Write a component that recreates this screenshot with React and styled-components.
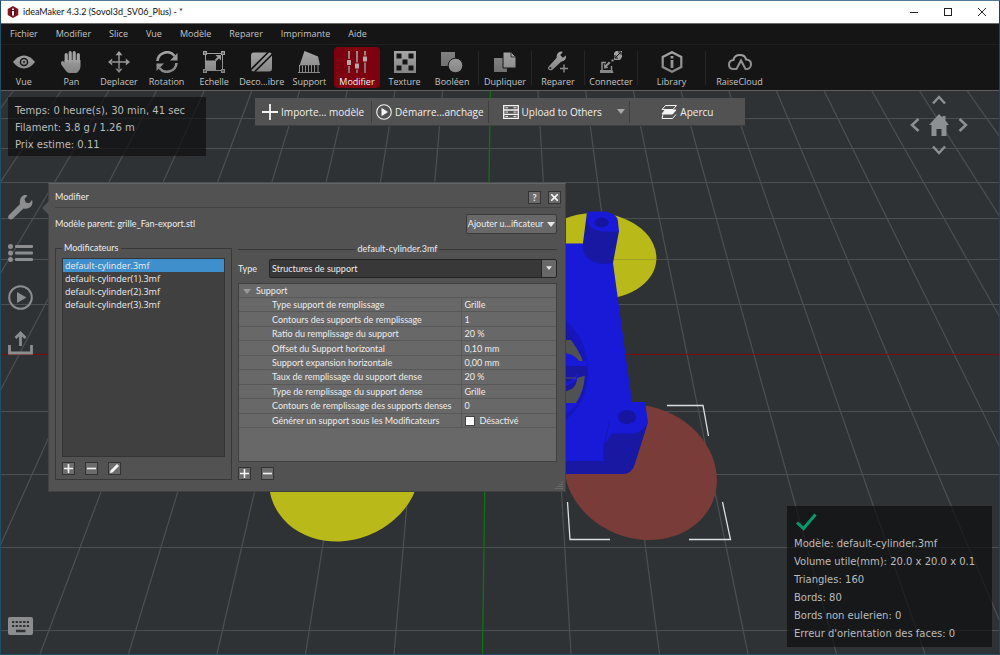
import React, { useState } from "react";
import styled, { createGlobalStyle, css } from "styled-components";

const uiFont = `"Open Sans", "Noto Sans", sans-serif`;
const panelFont = `Lato, "Open Sans", sans-serif`;
const hudFont = `"DejaVu Sans", Verdana, sans-serif`;

const GlobalStyle = createGlobalStyle`
  *, *::before, *::after { box-sizing: border-box; }
  body { margin: 0; background: #2e3235; font: 9px/12px ${uiFont}; color: #c4c4c4; }
  button, select, input { font: inherit; color: inherit; margin: 0; }
  button { padding: 0; border: 0; background: none; cursor: pointer; white-space: nowrap; }
  svg { display: block; flex: none; }
`;

const Window = styled.div`
  min-height: 100vh;
  display: flex;
  flex-direction: column;
  border: 1px solid #1d5068;
  border-top-color: #54799b;
  border-right-color: #27435c;
`;

/* Title bar */
const TitleBar = styled.header`
  height: 22px;
  display: flex;
  align-items: center;
  gap: 4px;
  padding: 0 0 0 6px;
  background: #fff;
  color: #111;
`;
const WindowTitle = styled.h1`
  flex: 1;
  margin: 0;
  font: 9px/12px ${panelFont};
`;
const CaptionButtons = styled.div`
  display: flex;
`;
const CaptionButton = styled.button`
  width: 34px;
  height: 22px;
  display: grid;
  place-items: center;
`;

/* Menu and tool bars */
const MenuBar = styled.nav`
  height: 22px;
  display: flex;
  align-items: center;
  border-top: 1px solid #6a6a6a;
  border-bottom: 1px solid #1f1f1f;
  background: #151515;
`;
const MenuItem = styled.button`
  height: 20px;
  padding: 0 9px;
`;
const ToolBar = styled.div`
  height: 46px;
  display: flex;
  align-items: center;
  background: #151515;
  border-bottom: 1px solid #5c5e5f;
`;
const ToolGroup = styled.div`
  width: 474px;
  margin-right: 3px;
  display: flex;
  gap: 2px;
`;
const ToolCell = styled.div`
  width: ${(p) => (p.$wide ? 68 : 53)}px;
  height: 34px;
  display: flex;
  align-items: center;
  justify-content: center;
  border-left: 1px solid #262626;
`;
const ToolButton = styled.button`
  flex: 1;
  min-width: 0;
  height: 41px;
  display: flex;
  flex-direction: column;
  align-items: center;
  gap: 3px;
  padding-top: 4px;
  border-radius: 4px;
  ${(p) => p.$active && css`background: #7c0210; color: #f2f2f2;`}
`;

/* 3D view */
const Viewport = styled.main`
  position: relative;
  flex: 1;
  min-height: 560px;
  background: #2e3235;
  overflow: hidden;
`;
const Scene = styled.svg`
  position: absolute;
  inset: 0;
  width: 100%;
  height: 100%;
`;
const Hud = styled.section`
  position: absolute;
  padding: 0 7px;
  background: rgba(10, 10, 12, 0.66);
  color: #bcbcbc;
  font: 10px/17px ${hudFont};
  white-space: nowrap;
  p { margin: 0; }
`;
const PrintStats = styled(Hud)`
  left: 7px;
  top: 6px;
  width: 198px;
  padding: 5px 7px 3px;
`;
const ModelInfo = styled(Hud)`
  right: 7px;
  bottom: 7px;
  width: 205px;
  line-height: 18px;
  padding: 7px 7px 4px;
  svg { margin: 0 0 4px 2px; }
`;
const ActionBar = styled.div`
  position: absolute;
  left: 50%;
  top: 7px;
  width: 490px;
  height: 28px;
  margin-left: -245px;
  display: flex;
  align-items: center;
  background: #525252;
  border-bottom: 1px solid #404040;
  color: #f0f0f0;
  font-size: 10px;
`;
const ActionButton = styled.button`
  flex: 1 1 116px;
  height: 22px;
  display: flex;
  align-items: center;
  justify-content: center;
  gap: 3px;
  & + & { border-left: 1px solid #3e3e3e; }
`;
const UploadButton = styled(ActionButton)`
  flex-basis: 141px;
  justify-content: flex-start;
  padding: 0 4px 0 14px;
  > :last-child { margin-left: auto; }
`;
const ViewNav = styled.nav`
  position: absolute;
  right: 24px;
  top: 0;
  display: grid;
  grid-template-columns: 24px 24px 24px;
  grid-template-rows: 18px 32px 18px;
  place-items: center;
  color: #8d9092;
`;
const NavButton = styled.button`
  grid-area: ${(p) => p.$area};
  display: grid;
  place-items: center;
`;
const SideDock = styled.nav`
  position: absolute;
  left: 7px;
  top: 104px;
  bottom: 16px;
  display: flex;
  flex-direction: column;
  gap: 20px;
  color: #8b8d8f;
  > :last-child { margin-top: auto; }
`;
const DockButton = styled.button`
  width: 25px;
  height: 25px;
  display: grid;
  place-items: center;
`;

/* Modifier panel */
const Panel = styled.section`
  position: absolute;
  left: 47px;
  top: 92px;
  width: 518px;
  padding: 7px 8px 11px 6px;
  background: #525252;
  border: 1px solid #414141;
  border-top-color: #626465;
  color: #ededed;
  font: 9px/12px ${panelFont};
  &::before {
    content: "";
    position: absolute;
    left: -7px;
    top: 17px;
    border: solid transparent;
    border-width: 7px 7px 7px 0;
    border-right-color: #525252;
  }
`;
const PanelHeader = styled.header`
  display: flex;
  align-items: center;
  gap: 7px;
  height: 17px;
  padding-bottom: 4px;
  border-bottom: 1px solid #434343;
  margin-right: -4px;
`;
const PanelTitle = styled.h2`
  flex: 1;
  margin: 0;
  font: inherit;
`;
const SquareButton = styled.button`
  width: 13px;
  height: 13px;
  display: grid;
  place-items: center;
  background: #6c6c6c;
  border: 1px solid #333;
`;
const ParentRow = styled.div`
  display: flex;
  align-items: center;
  justify-content: space-between;
  margin-top: 6px;
`;
const AddButton = styled.button`
  width: 91px;
  height: 20px;
  display: flex;
  align-items: center;
  justify-content: center;
  gap: 4px;
  background: #686868;
  border: 1px solid #3a3a3a;
  border-radius: 2px;
`;
const PanelBody = styled.div`
  display: flex;
  gap: 6px;
  margin-top: 9px;
`;
const ModifierSet = styled.fieldset`
  width: 177px;
  margin: 0;
  padding: 5px 6px 3px;
  display: flex;
  flex-direction: column;
  border: 1px solid #383838;
  legend { padding: 0 2px; line-height: 10px; }
`;
const ModifierList = styled.ul`
  height: 199px;
  margin: 0;
  padding: 0;
  list-style: none;
  background: #404040;
  border: 1px solid #343434;
  font-family: ${uiFont};
`;
const ModifierItem = styled.button`
  width: 100%;
  height: 13px;
  padding: 0 2px;
  text-align: left;
  line-height: 13px;
  display: block;
  ${(p) => p.$selected && css`background: #3e8fcb;`}
`;
const ButtonRow = styled.div`
  display: flex;
  gap: 10px;
  margin-top: 5px;
`;
const Settings = styled.div`
  flex: 1;
  min-width: 0;
`;
const SettingsTitle = styled.h3`
  display: flex;
  align-items: center;
  gap: 2px;
  height: 12px;
  margin: 0 0 4px;
  font: inherit;
  &::before, &::after { content: ""; flex: 1; height: 1px; background: #383838; }
`;
const TypeRow = styled.div`
  display: flex;
  align-items: center;
  justify-content: space-between;
`;
const SelectBox = styled.div`
  position: relative;
  width: 288px;
  svg { position: absolute; right: 5px; top: 7px; pointer-events: none; }
`;
const Select = styled.select`
  display: block;
  width: 100%;
  height: 19px;
  padding: 0 2px;
  appearance: none;
  border: 1px solid #242424;
  border-radius: 2px;
  background: linear-gradient(90deg, #383838 calc(100% - 15px), #242424 0, #242424 calc(100% - 14px), #686868 0);
`;
const SettingsView = styled.div`
  height: 179px;
  margin-top: 5px;
  background: #686868;
  border: 1px solid #3f3f3f;
`;
const SettingsTable = styled.table`
  width: 100%;
  height: 144px;
  table-layout: fixed;
  border-collapse: collapse;
  line-height: 12px;
  th { font-weight: normal; text-align: left; }
  th, td { padding: 1px 0 0; border-bottom: 1px solid #585858; white-space: nowrap; }
  tbody th { padding-left: 33px; width: 222px; }
  td { padding-left: 3px; border-left: 1px solid #585858; }
`;
const GroupToggle = styled.button`
  display: flex;
  align-items: center;
  gap: 5px;
  padding-left: 4px;
`;
const CheckLabel = styled.label`
  display: flex;
  align-items: center;
  gap: 5px;
`;
const CheckBox = styled.input`
  appearance: none;
  width: 10px;
  height: 10px;
  background: #fff;
  border: 1px solid #444;
`;
const Grip = styled.svg`
  position: absolute;
  right: 2px;
  bottom: 1px;
`;
const SharedPaints = styled.svg`
  position: absolute;
`;

const Caret = ({ size = 8, color = "#e8e8e8" }) => (
  <svg width={size} height={size / 2 + 1} viewBox="0 0 8 5"><path d="M0 0h8L4 5z" fill={color} /></svg>
);

const toolIcons = {
  eye: <><path d="M0 11Q5 4.500 11 4.500T22 11Q17 17.500 11 17.500T0 11z" /><circle cx="11" cy="11" r="4.300" fill="#151515" /><circle cx="11" cy="11" r="2.800" /><circle cx="11" cy="11" r="1.200" fill="#333" /></>,
  hand: <>
    <path d="M4.500 9h16v6.500q0 3-2.500 5.500-1 1-2.500 1h-6q-2 0-3.500-2L1.200 13.500Q.500 10.500 2 10q1.500-.500 2.500 1.500z" />
    <path d="M6.200 10V3.500M10.200 10V1.700M14.200 10V1.700M18.300 10.500V3.500" fill="none" stroke="#a2a2a2" strokeWidth="3.200" strokeLinecap="round" />
  </>,
  move: <path d="M10.300 3.500v6.800H3.500v1.400h6.800v6.800h1.400v-6.800h6.800v-1.400h-6.800V3.500zM11 0L7.500 4.200h7zM11 22l-3.500-4.200h7zM0 11l4.200-3.500v7zM22 11l-4.200-3.500v7z" />,
  rotate: <><g fill="none" stroke="url(#metal)" strokeWidth="2.600"><path d="M1.500 10A9.500 9.500 0 0 1 18.500 5" /><path d="M20.500 12A9.500 9.500 0 0 1 3.500 17" /></g><path d="M21.500 2v7.500h-7.500zM.500 20v-7.500h7.500z" /></>,
  scale: <><g fill="none" stroke="url(#metal)"><rect x="2.500" y="2.500" width="17" height="17" /><path d="M12.500 9.500L16.500 5.500" strokeWidth="1.800" /></g><path d="M2.500 9.500h10.500v10H2.500zM0 0h4v4H0zM18 0h4v4h-4zM0 18h4v4H0zM18 18h4v4h-4zM18 4v5.500L12.500 4z" /><path d="M1.300 1.300h1.400v1.400H1.300zM19.300 1.300h1.400v1.400h-1.400zM1.300 19.300h1.400v1.400H1.300zM19.300 19.300h1.400v1.400h-1.400z" fill="#333" /></>,
  cut: <><rect x="0" y="1.500" width="21" height="19" rx="3" /><path d="M0 18.500L17.500 1M3.500 21L21.500 3" stroke="#151515" strokeWidth="1.600" /></>,
  support: <><path d="M6.500 0L20 5.500 22 14 1.500 14.500z" /><path d="M1.500 14v7M4.500 15v6M7.500 15v6M10.500 14v7M13.500 14v7M16.500 13v8M20 13v8M0 21.500h22" stroke="url(#metal)" /></>,
  sliders: <><path d="M2 0h2v22H2zM10 0h2v22h-2zM18 0h2v22h-2z" opacity=".8" /><path d="M0 8h6v7H0zM8 11.500h6v7H8zM16 4.500h6v7h-6z" fill="#7c0210" /><path d="M1 9h4v5H1zM9 12.500h4v5H9zM17 5.500h4v5h-4z" fill="#b9a7a9" /></>,
  texture: <path fillRule="evenodd" d="M0 0h22v22H0zM2.500 2.500h5v5h-5zM14.500 2.500h5v5h-5zM8.500 8.500h5v5h-5zM2.500 14.500h5v5h-5zM14.500 14.500h5v5h-5z" />,
  boolean: <><path d="M0 1h14v14H0z" opacity=".75" /><circle cx="14.500" cy="14.500" r="7.300" stroke="#151515" /></>,
  duplicate: <><path d="M0 7h13v14H0z" opacity=".8" /><path d="M9 1h8l5 5v11H9z" stroke="#151515" /><path d="M17 1v5h5" fill="none" stroke="#333" /></>,
  repair: <><path d="M14 1q2-1 4 0l-3 3.500 3 3L21.500 5q.800 6-5.500 7l-10 9q-4 1-5-1.500 0-2 2-3.500l8-8.500Q10.500 3 14 1z" transform="scale(.88 .9)" /><circle cx="3.300" cy="17" r="1" fill="#151515" /><path d="M16.300 13.500v3.300H13v1.400h3.300v3.300h1.400v-3.300H21v-1.400h-3.300v-3.300z" /></>,
  connect: <><path d="M2 19v-7.500h4M11.500 15v4M1 20.500h11" fill="none" stroke="url(#metal)" strokeWidth="1.500" /><path d="M0 19h12.500l1 3H0z" /><path d="M4 17.500v-5l1.500 1.500L9 10.500l1.500 1.500L7 15.500 8.500 17z" /><path d="M11.500 8.500h2v2h-2z" /><path d="M14 2l2-2h6v6l-2 3h-6z" /><path d="M15.500 6.500l5-5M15 4v3h3M18 1h3v3" fill="none" stroke="#151515" /></>,
  library: <><path d="M11 1.200L20.300 6v10L11 20.800 1.700 16V6z" fill="none" stroke="url(#metal)" strokeWidth="2.200" /><path d="M9.600 5h2.800v2.500H9.600zM9.600 9h2.800v8H9.600z" /></>,
  cloud: <path d="M8 18H4.500C1.500 18 0 16 0 13.500S2 9 4.500 9C5 6 7.500 4 11 4s5.500 2 6 4.500c3 0 5 2 5 4.500s-1.500 5-4 5h-1.500L12 9.500 7.500 18" fill="none" stroke="url(#metal)" strokeWidth="2" transform="translate(1 0)" />,
};

const mainTools = [
  ["Vue", "eye"], ["Pan", "hand"], ["Deplacer", "move"], ["Rotation", "rotate"], ["Echelle", "scale"],
  ["Deco...ibre", "cut"], ["Support", "support"], ["Modifier", "sliders"], ["Texture", "texture"], ["Booléen", "boolean"],
];
const extraTools = [
  ["Dupliquer", "duplicate"], ["Reparer", "repair"], ["Connecter", "connect"], ["Library", "library", true], ["RaiseCloud", "cloud", true],
];

const Tool = ({ label, icon, active }) => (
  <ToolButton $active={active} aria-pressed={active}>
    <svg width={icon === "cloud" ? 26 : 22} height="22" viewBox={icon === "cloud" ? "-1 0 26 22" : "0 0 22 22"} fill="url(#metal)" aria-hidden="true">
      {toolIcons[icon]}
    </svg>
    <span>{label}</span>
  </ToolButton>
);

const gridRows = [118, 148, 182, 218, 259, 304, 411, 474, 547, 630];
const gridColumns = Array.from({ length: 31 }, (_, i) => i - 15).filter((n) => n !== 0);

const PrintBed = () => (
  <Scene viewBox="1 91 998 563" preserveAspectRatio="xMidYMid slice" aria-label="Plateau">
    <g stroke="#4d5053" strokeWidth="1.200">
      {gridRows.map((y) => <path key={y} d={`M-500 ${y + 0.5}H1500`} />)}
      {gridColumns.map((n) => <path key={n} d={`M${490.3 + 47.7 * n} 91L${482.5 + 88.5 * n} 654`} />)}
    </g>
    <path d="M-500 354.500H1500" stroke="#7c0c0e" />
    <path d="M490.300 91L482.500 654" stroke="#0d7411" strokeWidth="1.300" />
    <ellipse cx="597" cy="256" rx="59.500" ry="43" fill="#b9b919" transform="rotate(4 597 256)" />
    <path d="M566 259.500H656" stroke="#a0a02c" />
    <ellipse cx="344.500" cy="474" rx="77" ry="66" fill="#b9b919" transform="rotate(-22 344 474)" />
    <ellipse cx="640.500" cy="472" rx="78" ry="66" fill="#7a3c38" transform="rotate(22 640 472)" />
    <path d="M560 243.500H584L613 263 632 402H645L648 422 635 463Q632 474 623 474H560z" fill="#1919d8" />
    <path d="M560 461H604V445L612 433.500H634Q643 432 648 422L635 463Q632 474 623 474H560z" fill="#1818a2" />
    <path d="M604 461V445L610 420" fill="none" stroke="#1616b4" strokeWidth="1" />
    <ellipse cx="627" cy="417" rx="9" ry="7" fill="#1515a0" />
    <path d="M587 212L583 243V250Q586 263 605 264L613 263 619 231 600 222z" fill="#1818a2" />
    <path d="M587 211.500H605Q618 214 618 222L619 231.500H603Q589 230 587 220z" fill="#1919d8" />
    <ellipse cx="601.500" cy="222.500" rx="7" ry="5" fill="#1515a0" />
    <path d="M560 315Q588 337 588 372 588 405 560 424z" fill="#1616bb" />
    <path d="M560 340H571Q585 358 585 374 584 392 576 403H560z" fill="#505152" />
    <path d="M560 326Q568 328 572 340H560z" fill="#1818a2" />
    <path d="M560 353Q573 352 579 361H587V366H560z" fill="#1919d8" />
    <path d="M560 366H587V375L577 378Q577 391 560 392z" fill="#1818a2" />
    <path d="M560 384Q574 385 577 375" fill="none" stroke="#1919d8" strokeWidth="3" />
    <path d="M560 378H576" stroke="#505152" strokeWidth="1" />
    <path d="M560 403H578Q572 412 560 416z" fill="#1919d8" />
    <g fill="none" stroke="#dedede" strokeWidth="1.300">
      <path d="M667 405.500H703L708.500 436M567.500 502L570 539.500H610M689 539.500H730.500L722.500 502" />
    </g>
  </Scene>
);

const menus = ["Fichier", "Modifier", "Slice", "Vue", "Modèle", "Reparer", "Imprimante", "Aide"];
const modifiers = ["default-cylinder.3mf", "default-cylinder(1).3mf", "default-cylinder(2).3mf", "default-cylinder(3).3mf"];
const settings = [
  ["Type support de remplissage", "Grille"],
  ["Contours des supports de remplissage", "1"],
  ["Ratio du remplissage du support", "20 %"],
  ["Offset du Support horizontal", "0,10 mm"],
  ["Support expansion horizontale", "0,00 mm"],
  ["Taux de remplissage du support dense", "20 %"],
  ["Type de remplissage du support dense", "Grille"],
  ["Contours de remplissage des supports denses", "0"],
];

const Plus = () => <svg width="9" height="9" viewBox="0 0 9 9"><path d="M0 4.500h9M4.500 0v9" stroke="#f4f4f4" strokeWidth="1.600" /></svg>;
const Minus = () => <svg width="9" height="9" viewBox="0 0 9 9"><path d="M0 4.500h9" stroke="#f4f4f4" strokeWidth="1.600" /></svg>;
const Pencil = () => <svg width="9" height="9" viewBox="0 0 9 9"><path d="M0 9l.500-2.500L7 0l2 2-6.500 6.500z" fill="#f4f4f4" /></svg>;

function ModifierPanel() {
  const [selected, setSelected] = useState(0);
  return (
    <Panel aria-labelledby="panel-title">
      <PanelHeader>
        <PanelTitle id="panel-title">Modifier</PanelTitle>
        <SquareButton aria-label="Aide"><b>?</b></SquareButton>
        <SquareButton aria-label="Fermer">
          <svg width="7" height="7" viewBox="0 0 7 7"><path d="M0 0l7 7M7 0L0 7" stroke="#f4f4f4" strokeWidth="1.600" /></svg>
        </SquareButton>
      </PanelHeader>
      <ParentRow>
        <span>Modèle parent: grille_Fan-export.stl</span>
        <AddButton>Ajouter u...ificateur <Caret /></AddButton>
      </ParentRow>
      <PanelBody>
        <ModifierSet>
          <legend>Modificateurs</legend>
          <ModifierList>
            {modifiers.map((name, i) => (
              <li key={name}><ModifierItem $selected={i === selected} onClick={() => setSelected(i)}>{name}</ModifierItem></li>
            ))}
          </ModifierList>
          <ButtonRow>
            <SquareButton aria-label="Ajouter"><Plus /></SquareButton>
            <SquareButton aria-label="Supprimer"><Minus /></SquareButton>
            <SquareButton aria-label="Renommer"><Pencil /></SquareButton>
          </ButtonRow>
        </ModifierSet>
        <Settings>
          <SettingsTitle>{modifiers[selected]}</SettingsTitle>
          <TypeRow>
            <label htmlFor="modifier-type">Type</label>
            <SelectBox>
              <Select id="modifier-type"><option>Structures de support</option></Select>
              <Caret size={6} />
            </SelectBox>
          </TypeRow>
          <SettingsView>
            <SettingsTable>
              <colgroup><col width="222" /><col /></colgroup>
              <thead>
                <tr><th colSpan="2"><GroupToggle aria-expanded="true"><Caret color="#9a9a9a" />Support</GroupToggle></th></tr>
              </thead>
              <tbody>
                {settings.map(([name, value]) => <tr key={name}><th scope="row">{name}</th><td>{value}</td></tr>)}
                <tr>
                  <th scope="row">Générer un support sous les Modificateurs</th>
                  <td><CheckLabel><CheckBox type="checkbox" />Désactivé</CheckLabel></td>
                </tr>
              </tbody>
            </SettingsTable>
          </SettingsView>
          <ButtonRow>
            <SquareButton aria-label="Ajouter un réglage"><Plus /></SquareButton>
            <SquareButton aria-label="Supprimer le réglage"><Minus /></SquareButton>
          </ButtonRow>
        </Settings>
      </PanelBody>
      <Grip width="8" height="8" viewBox="0 0 8 8"><path d="M7 0v1M5 2v1M7 2v1M3 4v1M5 4v1M7 4v1M1 6v1M3 6v1M5 6v1M7 6v1" stroke="#808080" /></Grip>
    </Panel>
  );
}

const Chevron = ({ turn }) => (
  <svg width="16" height="16" viewBox="0 0 16 16"><path d="M2 11.500L8 5l6 6.500" fill="none" stroke="currentColor" strokeWidth="2.500" transform={`rotate(${turn} 8 8)`} /></svg>
);

export default function App() {
  return (
    <Window>
      <GlobalStyle />
      <SharedPaints width="0" height="0" aria-hidden="true">
        <linearGradient id="metal" gradientUnits="userSpaceOnUse" x1="0" y1="0" x2="0" y2="22">
          <stop offset="0" stopColor="#a6a6a6" /><stop offset="1" stopColor="#858585" />
        </linearGradient>
      </SharedPaints>
      <TitleBar>
        <svg width="12" height="12" viewBox="0 0 12 12" aria-hidden="true">
          <path d="M6 0l5.300 3v6L6 12 .700 9V3z" fill="#8e1420" /><path d="M3.500 3L6 1.500 8.500 3v6L6 10.500 3.500 9z" fill="#5a0a12" /><path d="M5 2.500h2V4H5zM5 5h2v4.500H5z" fill="#fff" />
        </svg>
        <WindowTitle>ideaMaker 4.3.2 (Sovol3d_SV06_Plus) - *</WindowTitle>
        <CaptionButtons>
          <CaptionButton aria-label="Réduire"><svg width="8" height="8" viewBox="0 0 8 8"><path d="M0 4.500h8" stroke="#222" /></svg></CaptionButton>
          <CaptionButton aria-label="Agrandir"><svg width="8" height="8" viewBox="0 0 8 8"><rect x=".500" y=".500" width="7" height="7" fill="none" stroke="#222" /></svg></CaptionButton>
          <CaptionButton aria-label="Fermer"><svg width="8" height="8" viewBox="0 0 8 8"><path d="M0 0l8 8M8 0L0 8" stroke="#222" /></svg></CaptionButton>
        </CaptionButtons>
      </TitleBar>
      <MenuBar>{menus.map((m) => <MenuItem key={m}>{m}</MenuItem>)}</MenuBar>
      <ToolBar>
        <ToolGroup>{mainTools.map(([label, icon]) => <Tool key={label} label={label} icon={icon} active={icon === "sliders"} />)}</ToolGroup>
        {extraTools.map(([label, icon, wide]) => <ToolCell key={label} $wide={wide}><Tool label={label} icon={icon} /></ToolCell>)}
      </ToolBar>
      <Viewport>
        <PrintBed />
        <SideDock>
          <DockButton aria-label="Réparer">
            <svg width="25" height="25" viewBox="0 0 25 25" fill="currentColor"><path d="M16 0q2-.500 3.500.300L16.500 4l1.200 3.500 3.500.800L24 5q1.500 4-1.500 7-3 2.500-7 1.500L5 23.500q-2.500 2-4.300 0-1.500-2 .800-4L12 9Q11 2.500 16 0z" /></svg>
          </DockButton>
          <DockButton aria-label="Liste">
            <svg width="25" height="18" viewBox="0 0 25 18" fill="currentColor"><circle cx="2.500" cy="2.500" r="2.500" /><circle cx="2.500" cy="9" r="2.500" /><circle cx="2.500" cy="15.500" r="2.500" /><rect x="7" y="1" width="18" height="3" rx="1" /><rect x="7" y="7.500" width="18" height="3" rx="1" /><rect x="7" y="14" width="18" height="3" rx="1" /></svg>
          </DockButton>
          <DockButton aria-label="Lancer">
            <svg width="25" height="25" viewBox="0 0 25 25"><circle cx="12.500" cy="12.500" r="11.300" fill="none" stroke="currentColor" strokeWidth="2" /><path d="M9 7l9.500 5.500L9 18z" fill="currentColor" /></svg>
          </DockButton>
          <DockButton aria-label="Exporter">
            <svg width="25" height="24" viewBox="0 0 25 24"><path d="M1.500 14v8h22V14M12.500 15V2M7.500 7L12.500 2 17.500 7" fill="none" stroke="currentColor" strokeWidth="2.800" /></svg>
          </DockButton>
          <DockButton aria-label="Clavier">
            <svg width="25" height="18" viewBox="0 0 25 18"><rect width="25" height="18" rx="2" fill="currentColor" /><path d="M4 5h17M4 9h17" stroke="#2e3235" strokeWidth="2" strokeDasharray="2.300 1.400" /><path d="M8 14h9.500" stroke="#2e3235" strokeWidth="2.500" /></svg>
          </DockButton>
        </SideDock>
        <PrintStats>
          <p>Temps: 0 heure(s), 30 min, 41 sec</p>
          <p>Filament: 3.8 g / 1.26 m</p>
          <p>Prix estime: 0.11</p>
        </PrintStats>
        <ActionBar>
          <ActionButton>
            <svg width="16" height="16" viewBox="0 0 16 16"><path d="M0 8h16M8 0v16" stroke="#f4f4f4" strokeWidth="1.800" /></svg>
            Importe... modèle
          </ActionButton>
          <ActionButton>
            <svg width="16" height="16" viewBox="0 0 16 16"><circle cx="8" cy="8" r="7.300" fill="none" stroke="#f4f4f4" strokeWidth="1.100" /><path d="M5.500 3.800l6.500 4.200-6.500 4.200z" fill="#f4f4f4" /></svg>
            Démarre...anchage
          </ActionButton>
          <UploadButton>
            <svg width="16" height="14" viewBox="0 0 16 14" fill="none" stroke="#f4f4f4" strokeWidth="1.300"><path d="M.700.700h14.600v12.600H.700zM.700 5h14.600M.700 9.300h14.600" /><path d="M2.500 2.800H5M2.500 7.100H5M2.500 11.400H5M10.500 2.800h3M10.500 7.100h3M10.500 11.400h3" strokeWidth="1" /></svg>
            Upload to Others
            <Caret color="#a8a8a8" />
          </UploadButton>
          <ActionButton>
            <svg width="16" height="14" viewBox="0 0 16 14" fill="none" stroke="#f4f4f4" strokeWidth="1"><path d="M4.500.500h11l-3.500 4H1z" /><path d="M4 5h11l-3.500 4H1z" fill="#f4f4f4" /><path d="M2 9.500L1 13.500h10.500L15 9.500" /></svg>
            Apercu
          </ActionButton>
        </ActionBar>
        <ViewNav>
          <NavButton $area="1 / 2" aria-label="Haut"><Chevron turn={0} /></NavButton>
          <NavButton $area="2 / 1" aria-label="Gauche"><Chevron turn={-90} /></NavButton>
          <NavButton $area="2 / 2" aria-label="Accueil">
            <svg width="20" height="22" viewBox="0 0 20 22" fill="currentColor"><path d="M10 0l3.500 3.500V2h3v4.500L20 11h-2.500v11h-5v-7h-5v7h-5V11H0z" /></svg>
          </NavButton>
          <NavButton $area="2 / 3" aria-label="Droite"><Chevron turn={90} /></NavButton>
          <NavButton $area="3 / 2" aria-label="Bas"><Chevron turn={180} /></NavButton>
        </ViewNav>
        <ModifierPanel />
        <ModelInfo>
          <svg width="21" height="18" viewBox="0 0 21 18"><path d="M1 9.500l6.500 6L19.500 1.500" fill="none" stroke="#049a68" strokeWidth="3" /></svg>
          <p>Modèle: default-cylinder.3mf</p>
          <p>Volume utile(mm): 20.0 x 20.0 x 0.1</p>
          <p>Triangles: 160</p>
          <p>Bords: 80</p>
          <p>Bords non eulerien: 0</p>
          <p>Erreur d'orientation des faces: 0</p>
        </ModelInfo>
      </Viewport>
    </Window>
  );
}
